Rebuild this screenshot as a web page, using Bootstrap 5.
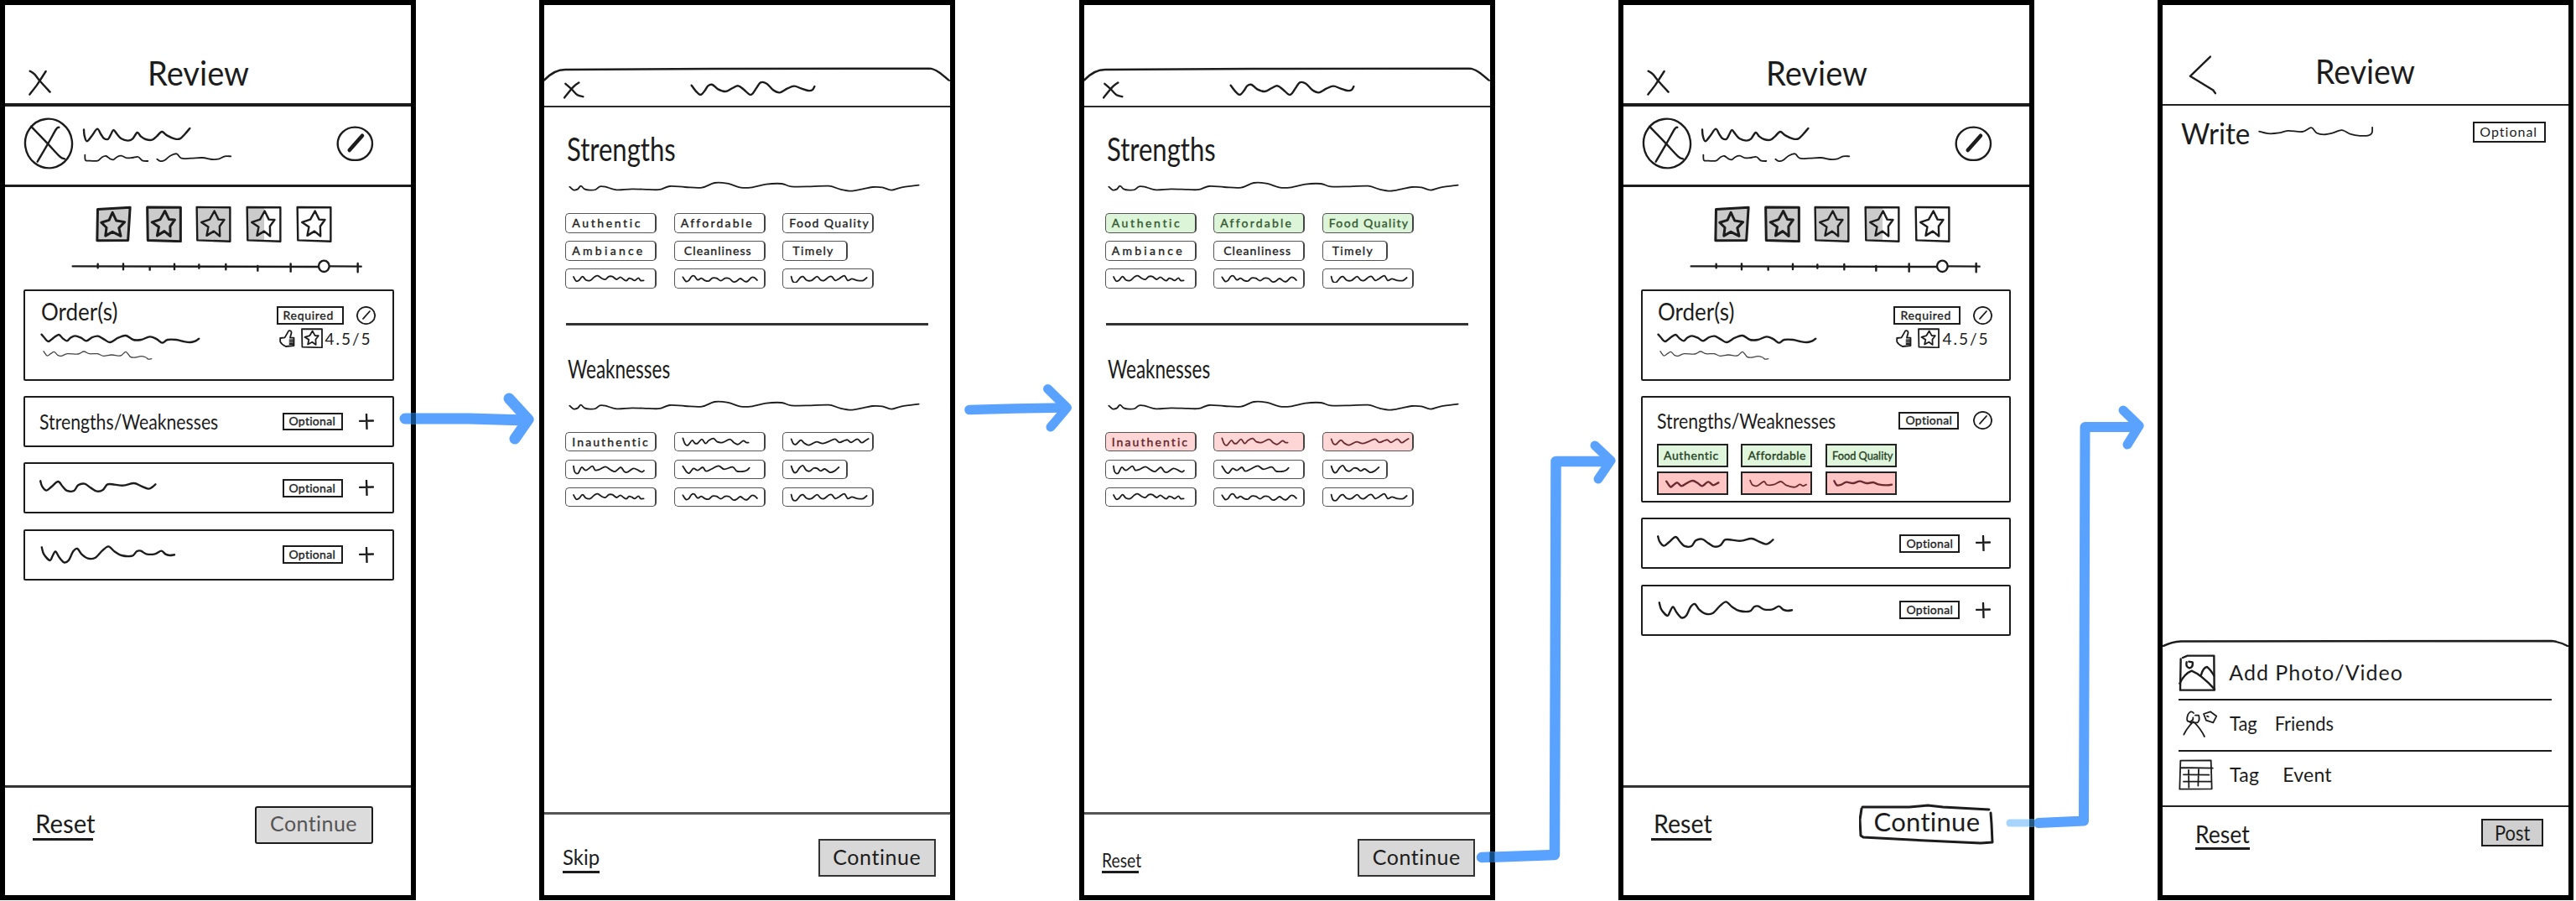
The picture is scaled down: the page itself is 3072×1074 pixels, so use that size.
<!DOCTYPE html>
<html lang="en">
<head>
<meta charset="utf-8">
<title>Review flow wireframes</title>
<link href="https://cdn.jsdelivr.net/npm/bootstrap@5.3.0/dist/css/bootstrap.min.css" rel="stylesheet">
<script src="https://cdn.jsdelivr.net/npm/bootstrap@5.3.0/dist/js/bootstrap.bundle.min.js"></script>
<style>
body{width:3072px;height:1074px;overflow:hidden;background:#fff;color:#1c1c1c;font-family:Lato,"Open Sans",sans-serif}
.board{gap:147.33px;height:1074px}
.phone{width:496px;height:1073px;border:6px solid #000;flex:none;background:#fff}
svg{display:block;flex:none;fill:none;stroke:#1c1c1c;stroke-width:2.4;stroke-linecap:round;stroke-linejoin:round}
symbol path,symbol ellipse{vector-effect:non-scaling-stroke}
.thin{stroke-width:1.8}.hair{stroke-width:1.3;stroke:#444}.bold{stroke-width:3}
.hand{display:block;line-height:1;white-space:nowrap;flex:none}
.hand>i{display:inline-block;font-style:normal;transform-origin:0 50%}
.f42{font-size:40px}.f38{font-size:38px}.f31{font-size:31px}.f28{font-size:28px}.f25{font-size:25px}.f23{font-size:23px}.f19{font-size:19px}.f14{font-size:14px;-webkit-text-stroke:.35px}
/* review screens */
.top-bar{height:121px;border-bottom:4px solid #1c1c1c;padding:0 0 7.5px 27px}
.top-bar .hand{margin:0 0 8.5px 113px}
.who{height:95.5px;border-bottom:3px solid #1c1c1c;padding:13px 44px 0 22.3px}
.who .lines{margin:10px 0 0 10px;gap:11.7px}
.who .edit{margin-top:9.5px}
.stars{padding:22px 0 0 108px;gap:16.7px}
.slide{margin:18px 0 18px 78px}
.stack{gap:18.4px;margin-left:22px;width:441.5px}
.shift .stack{margin-left:21px}
.box{border:2.5px solid #1c1c1c;border-radius:2px}
.box.order{height:109px;padding:10.5px 20px 0 18.5px}
.box.item{height:61px;padding:0 22px 0 17px}
.box.open{height:127px;padding:0 17px 0 17px}
.box.open .head{height:55px;padding-right:3px}
.tagbox{border:2.4px solid #1c1c1c;height:21.5px;width:72px;padding-left:6px}
.tagbox.req{width:80px}
.foot{height:131.5px;border-top:3px solid #333;padding:0 45.5px 0 33px}
.under{border-bottom:3px solid #1c1c1c}
.go{border:2.4px solid #1c1c1c;border-radius:3px;background:#dcdcdc;width:141px;height:45px;flex:none}
.mini{width:85px;height:28px;border:2.2px solid #222;padding-left:6px}
.minis{gap:5.5px 15.5px;width:287px}
.gr{background:#dff5dc;color:#24401f}.rd{background:#ffc4c4}
.rd svg{stroke:#6b2a30}
/* sheet screens */
.sheet-bar{height:31px;border-bottom:2.5px solid #2a2a2a;padding-left:22.4px}
.chips{display:grid;grid-template-columns:repeat(3,109px);gap:9.5px 20.5px;margin-left:25px}
.chip{height:23.5px;border:1.6px solid #555;border-right:2.6px solid #444;border-radius:5px;padding-left:7px}
.chip.short{width:78px}
.chip.gr{background:#dcf5d8;color:#33552f}.chip.rd{background:#ffd6d6;color:#5c2228}
.rule{height:2.2px;background:#333;margin-left:26px;width:432px}
.foot.low{height:99px;border-color:#555;padding:0 17.5px 0 21.7px}
.low .go{border-radius:0;width:140px;border-width:2px;border-color:#333;background:#d8d8d8}
/* write screen */
.opt{border-bottom:2.4px solid #1c1c1c}
</style>
</head>
<body>
<svg width="0" height="0" class="position-absolute">
<symbol id="x-a" viewBox="100 250 90 100" preserveAspectRatio="none"><path data-p="108 258 125 270 145 295 180 333"/><path data-p="165 259 135 305 107 342"/></symbol>
<symbol id="x-b" viewBox="95 108 75 70" preserveAspectRatio="none"><path data-p="102 120 125 142 145 163 165 169"/><path data-p="150 116 130 132 98 173"/></symbol>
<symbol id="w1" viewBox="295 450 395 60" preserveAspectRatio="none"><path data-p="301 463 303 485 312 505 330 485 349 461 362 480 373 495 388 497 398 480 407 465 420 480 435 496 458 503 475 497 492 474 505 488 522 498 545 500 562 487 580 471 598 484 625 496 645 496 662 480 680 459"/></symbol>
<symbol id="w2" viewBox="300 545 540 38" preserveAspectRatio="none"><path data-p="310 553 312 572 330 574 355 574 370 562 385 557 400 567 412 570 425 560 440 556 460 564 480 563 500 560 515 573 535 575"/><path data-p="568 568 580 575 595 572 615 556 638 549 655 565 690 565 730 563 765 569 790 567 810 558 832 558"/></symbol>
<symbol id="avatar" viewBox="85 420 180 185" preserveAspectRatio="none"><ellipse cx="175" cy="513" rx="84" ry="88" transform="rotate(-8 175 513)"/><path data-p="112 452 170 512 215 560 232 568"/><path data-p="212 455 202 462 172 515 135 578"/></symbol>
<symbol id="edit" viewBox="1205 450 134 128" preserveAspectRatio="none"><ellipse cx="1272" cy="514" rx="62" ry="59"/><path d="M1298 485L1252 537"/></symbol>
<symbol id="star-a" viewBox="340 731 139 139" preserveAspectRatio="none"><path d="M348 745L473 738 465 862 346 863Z"/><path d="M405 757L420 788 452 793 430 815 437 846 405 830 378 845 382 814 362 795 392 786Z"/></symbol>
<symbol id="star-b" viewBox="523 734 131 135" preserveAspectRatio="none"><path d="M528 740L649 741 649 865 530 861Z"/><path d="M592 754L607 785 628 786 611 810 612 846 590 828 564 844 570 812 545 795 575 785Z"/></symbol>
<symbol id="slider" viewBox="250 920 1050 60" preserveAspectRatio="none"><path d="M258 951L1135 953M1178 951L1290 952"/><path d="M348 943V957M439 942V963M534 953V964M622 943V962M710 945V958M806 944V963M920 950V967M1038 942V970M1278 941V972"/><ellipse cx="1157" cy="951" rx="19" ry="20"/></symbol>
<symbol id="w3" viewBox="112 195 460 45" preserveAspectRatio="none"><path data-p="118 203 125 213 137 228 152 215 167 204 178 217 190 226 200 215 213 208 230 215 245 226 262 213 278 209 295 220 312 231 335 215 357 207 378 222 400 222 425 211 445 220 460 233 475 222 500 222 520 228 540 231 555 226 564 218"/></symbol>
<symbol id="w4" viewBox="115 255 320 45" preserveAspectRatio="none"><path data-p="122 263 132 279 142 272 152 265 162 277 172 280 190 272 220 273 236 264 252 272 275 272 292 280 315 276 340 279 355 265 368 283 382 285 398 281 412 285 418 291 428 290"/></symbol>
<symbol id="w5" viewBox="105 720 345 55" preserveAspectRatio="none"><path data-p="115 730 120 750 132 764 147 750 165 732 178 750 190 765 210 765 222 745 240 740 258 755 275 767 292 762 305 742 325 743 350 746 380 738 400 748 420 758 432 752 441 742"/></symbol>
<symbol id="w6" viewBox="110 955 395 70" preserveAspectRatio="none"><path data-p="119 965 125 990 142 1012 150 995 158 980 168 1000 182 1019 195 1012 208 980 220 970 232 990 250 1005 270 1003 290 978 308 962 325 980 345 994 375 996 388 980 400 978 415 989 440 989 458 978 470 990 482 994 495 992"/></symbol>
<symbol id="thumb" viewBox="780 180 55 68" preserveAspectRatio="none"><path d="M790 213L803 211 814 187Q822 184 822 194L818 212H829V240L806 243Q794 236 790 226ZM817 220H829M817 227H829M817 234H829"/></symbol>
<symbol id="plus" viewBox="0 0 18 20" preserveAspectRatio="none"><path d="M1 9.3L17 9M9 1L9.5 19"/></symbol>
<symbol id="lip" viewBox="27 60 1453 50" preserveAspectRatio="none"><path d="M22 112C50 80 80 68 105 69L630 66 1405 65C1430 66 1450 85 1485 115"/></symbol>
<symbol id="w7" viewBox="548 108 450 56" preserveAspectRatio="none"><path data-p="553 125 568 145 585 159 600 145 612 127 628 123 648 139 675 147 700 135 720 127 740 140 765 159 785 135 800 115 822 119 845 142 868 151 895 137 920 128 945 136 970 144 985 142 993 129"/></symbol>
<symbol id="w8" viewBox="110 468 1262 40" preserveAspectRatio="none"><path data-p="117 488 130 499 145 497 157 485 170 496 190 500 210 498 225 487 245 488 285 499 340 496 400 498 440 498 475 486 530 489 590 491 635 474 680 476 730 491 770 490 820 479 875 477 910 487 980 487 1045 485 1085 497 1125 503 1165 496 1200 489 1235 490 1268 500 1305 490 1366 482"/></symbol>
<symbol id="c1" viewBox="130 798 265 32" preserveAspectRatio="none"><path data-p="136 807 145 822 155 820 168 806 180 818 195 820 210 808 222 803 238 813 250 816 262 806 275 806 290 816 303 808 315 816 325 821 335 812 345 815 355 820 368 811 376 820 387 820"/></symbol>
<symbol id="c2" viewBox="512 798 280 32" preserveAspectRatio="none"><path data-p="519 808 530 823 540 820 550 806 560 804 572 818 585 812 598 820 612 822 625 811 640 812 655 821 670 812 685 813 700 825 712 822 725 813 740 823 750 823 765 809 775 810 785 819"/></symbol>
<symbol id="c3" viewBox="905 800 285 32" preserveAspectRatio="none"><path data-p="913 808 918 825 930 829 945 812 955 808 968 821 985 822 1005 808 1018 820 1030 822 1048 809 1058 808 1070 822 1085 815 1103 805 1115 822 1130 816 1150 822 1170 822 1183 812"/></symbol>
<symbol id="c4" viewBox="515 515 250 38" preserveAspectRatio="none"><path data-p="522 522 530 543 540 547 555 530 565 540 575 540 590 526 603 541 615 530 632 523 645 535 665 537 690 526 705 538 720 544 738 531 748 537 757 538"/></symbol>
<symbol id="c5" viewBox="905 520 292 34" preserveAspectRatio="none"><path data-p="913 527 920 543 930 546 947 531 960 542 975 549 990 543 1005 537 1025 543 1045 537 1070 527 1085 539 1105 532 1115 530 1128 539 1150 527 1165 540 1180 532 1190 526"/></symbol>
<symbol id="c6" viewBox="130 610 265 38" preserveAspectRatio="none"><path data-p="136 618 140 638 152 644 165 622 180 633 203 618 213 632 228 630 250 620 270 632 285 637 305 622 318 638 330 639 350 626 368 633 380 639 388 634"/></symbol>
<symbol id="c7" viewBox="515 614 252 38" preserveAspectRatio="none"><path data-p="522 622 535 642 545 647 560 630 575 637 593 626 605 640 625 632 650 621 670 633 700 625 715 640 735 641 750 637 760 628"/></symbol>
<symbol id="c8" viewBox="902 612 185 38" preserveAspectRatio="none"><path data-p="910 620 918 640 928 642 940 625 952 618 962 633 975 638 990 627 1003 628 1015 637 1030 630 1048 642 1065 637 1080 624"/></symbol>
<symbol id="d1" viewBox="445 265 170 35" preserveAspectRatio="none"><path data-p="453 273 465 293 475 285 485 278 497 290 515 278 530 271 545 280 558 290 575 275 590 287 605 278"/></symbol>
<symbol id="d2" viewBox="690 272 185 35" preserveAspectRatio="none"><path data-p="698 277 705 293 720 296 740 281 750 293 770 292 792 281 810 295 835 301 850 291 860 297 870 292"/></symbol>
<symbol id="d3" viewBox="938 275 182 30" preserveAspectRatio="none"><path data-p="944 282 952 297 965 295 980 286 1000 290 1020 283 1040 290 1060 287 1075 294 1100 297 1115 295"/></symbol>
<symbol id="w9" viewBox="685 405 330 38" preserveAspectRatio="none"><path data-p="690 423 715 430 745 428 770 421 810 424 835 411 850 428 870 433 895 428 920 419 945 432 970 437 995 436 1004 428 1005 410"/></symbol>
<symbol id="back" viewBox="485 175 90 130" preserveAspectRatio="none"><path d="M550 182L494 245 558 290 564 300"/></symbol>
<symbol id="photo" viewBox="143 122 135 135" preserveAspectRatio="none"><path d="M158 134L175 127 270 127 271 250 149 250 151 138"/><path d="M147 226Q165 190 190 181Q225 195 272 247M224 195Q232 168 245 167Q256 175 270 198M172 150Q168 168 182 171Q196 168 193 150L180 148"/></symbol>
<symbol id="friend" viewBox="148 315 130 105" preserveAspectRatio="none"><path d="M190 330Q180 318 170 335Q160 360 176 361Q190 356 188 346M196 338L208 338Q214 355 204 364H178M188 361Q165 385 155 407M190 361Q215 385 229 414M226 333L250 325 272 341 260 364 235 356ZM238 341L243 343"/></symbol>
<symbol id="event" viewBox="145 488 125 115" preserveAspectRatio="none"><path d="M152 496L261 495 264 597 149 598ZM152 521L268 523M163 546L254 547M163 571L262 571M181 530L182 592M217 526L215 586"/></symbol>
</svg>

<div class="position-relative">
<main class="board d-flex">

<section class="phone d-flex flex-column">
  <header class="top-bar d-flex align-items-end"><svg width="30" height="33.3"><use href="#x-a"/></svg><span class="hand f42" data-w="121"><i>Review</i></span></header>
  <div class="who d-flex align-items-start"><svg width="60" height="61.7"><use href="#avatar"/></svg><div class="lines d-flex flex-column"><svg width="131.7" height="20"><use href="#w1"/></svg><svg width="180" height="12.7" class="thin"><use href="#w2"/></svg></div><svg width="44.7" height="42.7" class="edit ms-auto"><use href="#edit"/><path d="M31 11.7L15.7 29" stroke-width="4.5"/></svg></div>
  <div class="stars d-flex"><svg width="43" height="44" class="bold"><path d="M3 4L41 2 39 42 2 42Z" fill="#cbcbcb" stroke="none"/><use href="#star-a"/></svg><svg width="43" height="44" class="bold"><path d="M2 2H41V42H2Z" fill="#cbcbcb" stroke="none"/><use href="#star-b"/></svg><svg width="43" height="44"><path d="M2 2H41V42H2Z" fill="#cbcbcb" stroke="none"/><use href="#star-b"/></svg><svg width="43" height="44"><path d="M2 2H22V42H2Z" fill="#cbcbcb" stroke="none"/><use href="#star-b"/></svg><svg width="43" height="44"><use href="#star-b"/></svg></div>
  <svg width="350" height="20" class="slide"><use href="#slider"/></svg>
  <div class="stack d-flex flex-column">
    <div class="box order d-flex justify-content-between">
      <div><span class="hand f28" data-w="91"><i>Order(s)</i></span><svg width="193.6" height="15" style="margin:10.8px 0 5px -2px"><use href="#w3"/></svg><svg width="134.7" height="15" class="hair"><use href="#w4"/></svg></div>
      <div class="pt-2"><div class="d-flex align-items-center justify-content-between" style="width:118px"><div class="tagbox req d-flex align-items-center"><span class="hand f14" data-w="60"><i>Required</i></span></div><svg width="23" height="22" class="thin"><use href="#edit"/></svg></div>
      <div class="d-flex align-items-center mt-1"><svg width="23" height="22.7" class="thin"><use href="#thumb"/></svg><svg width="26" height="24" style="margin:0 3px 0 6px" class="thin"><use href="#star-b"/></svg><span class="hand f19" data-w="54"><i>4.5/5</i></span></div></div>
    </div>
    <div class="box item d-flex align-items-center"><span class="hand f25" data-w="213"><i>Strengths/Weaknesses</i></span><div class="tagbox d-flex align-items-center ms-auto"><span class="hand f14" data-w="55"><i>Optional</i></span></div><svg width="18" height="19" style="margin-left:19px"><use href="#plus"/></svg></div>
    <div class="box item d-flex align-items-center"><svg width="145.2" height="18.3" style="margin:0 0 5px -3px"><use href="#w5"/></svg><div class="tagbox d-flex align-items-center ms-auto"><span class="hand f14" data-w="55"><i>Optional</i></span></div><svg width="18" height="19" style="margin-left:19px"><use href="#plus"/></svg></div>
    <div class="box item d-flex align-items-center"><svg width="166.2" height="23.3" style="margin:0 0 2px -1px"><use href="#w6"/></svg><div class="tagbox d-flex align-items-center ms-auto"><span class="hand f14" data-w="55"><i>Optional</i></span></div><svg width="18" height="19" style="margin-left:19px"><use href="#plus"/></svg></div>
  </div>
  <footer class="foot d-flex justify-content-between align-items-start mt-auto"><div class="under" style="margin-top:27px;height:36px;padding-left:3px;width:72px"><span class="hand f31" data-w="72"><i>Reset</i></span></div><div class="go d-flex align-items-center justify-content-center" style="margin-top:22px;color:#555;padding-bottom:4px"><span class="hand f25" data-w="104"><i>Continue</i></span></div></footer>
</section>

<section class="phone d-flex flex-column">
  <svg width="484" height="16.7" style="margin-top:74px"><use href="#lip"/></svg>
  <header class="sheet-bar d-flex"><svg width="25" height="22" style="margin-top:-1px"><use href="#x-b"/></svg><svg width="150" height="18.7" style="margin:-1px 0 0 126px"><use href="#w7"/></svg></header>
  <span class="hand f38" data-w="130" style="margin:30px 0 20.7px 27px"><i>Strengths</i></span>
  <svg width="420.7" height="13.3" class="thin" style="margin:0 0 24.7px 27.4px"><use href="#w8"/></svg>
  <div class="chips">
    <div class="chip d-flex align-items-center"><span class="hand f14" data-w="81"><i>Authentic</i></span></div><div class="chip d-flex align-items-center"><span class="hand f14" data-w="84"><i>Affordable</i></span></div><div class="chip d-flex align-items-center"><span class="hand f14" data-w="94"><i>Food Quality</i></span></div>
    <div class="chip d-flex align-items-center"><span class="hand f14" data-w="84"><i>Ambiance</i></span></div><div class="chip d-flex align-items-center"><span class="hand f14 ms-1" data-w="80"><i>Cleanliness</i></span></div><div class="chip short d-flex align-items-center"><span class="hand f14 ms-1" data-w="48"><i>Timely</i></span></div>
    <div class="chip d-flex align-items-center"><svg width="88.3" height="10.7" class="thin"><use href="#c1"/></svg></div><div class="chip d-flex align-items-center"><svg width="93.3" height="10.7" class="thin"><use href="#c2"/></svg></div><div class="chip d-flex align-items-center"><svg width="95" height="10.7" class="thin"><use href="#c3"/></svg></div>
  </div>
  <div class="rule" style="margin-top:41.5px"></div>
  <span class="hand f31" data-w="122" style="margin:36px 0 22px 28px"><i>Weaknesses</i></span>
  <svg width="420.7" height="13.3" class="thin" style="margin:0 0 25px 27.4px"><use href="#w8"/></svg>
  <div class="chips">
    <div class="chip d-flex align-items-center"><span class="hand f14" data-w="91"><i>Inauthentic</i></span></div><div class="chip d-flex align-items-center"><svg width="83.3" height="12.7" class="thin"><use href="#c4"/></svg></div><div class="chip d-flex align-items-center"><svg width="97" height="11.3" class="thin"><use href="#c5"/></svg></div>
    <div class="chip d-flex align-items-center"><svg width="88.3" height="12.7" class="thin"><use href="#c6"/></svg></div><div class="chip d-flex align-items-center"><svg width="84" height="12.7" class="thin"><use href="#c7"/></svg></div><div class="chip short d-flex align-items-center"><svg width="61.7" height="12.7" class="thin"><use href="#c8"/></svg></div>
    <div class="chip d-flex align-items-center"><svg width="88.3" height="10.7" class="thin"><use href="#c1"/></svg></div><div class="chip d-flex align-items-center"><svg width="93.3" height="10.7" class="thin"><use href="#c2"/></svg></div><div class="chip d-flex align-items-center"><svg width="95" height="10.7" class="thin"><use href="#c3"/></svg></div>
  </div>
  <footer class="foot low d-flex justify-content-between align-items-start mt-auto"><div class="under" style="margin-top:38px;height:32px;width:44px"><span class="hand f25" data-w="44"><i>Skip</i></span></div><div class="go d-flex align-items-center justify-content-center" style="margin-top:29px;padding-bottom:3px"><span class="hand f25" data-w="105"><i>Continue</i></span></div></footer>
</section>

<section class="phone d-flex flex-column">
  <svg width="484" height="16.7" style="margin-top:74px"><use href="#lip"/></svg>
  <header class="sheet-bar d-flex"><svg width="25" height="22" style="margin-top:-1px"><use href="#x-b"/></svg><svg width="150" height="18.7" style="margin:-1px 0 0 126px"><use href="#w7"/></svg></header>
  <span class="hand f38" data-w="130" style="margin:30px 0 20.7px 27px"><i>Strengths</i></span>
  <svg width="420.7" height="13.3" class="thin" style="margin:0 0 24.7px 27.4px"><use href="#w8"/></svg>
  <div class="chips">
    <div class="chip gr d-flex align-items-center"><span class="hand f14" data-w="81"><i>Authentic</i></span></div><div class="chip gr d-flex align-items-center"><span class="hand f14" data-w="84"><i>Affordable</i></span></div><div class="chip gr d-flex align-items-center"><span class="hand f14" data-w="94"><i>Food Quality</i></span></div>
    <div class="chip d-flex align-items-center"><span class="hand f14" data-w="84"><i>Ambiance</i></span></div><div class="chip d-flex align-items-center"><span class="hand f14 ms-1" data-w="80"><i>Cleanliness</i></span></div><div class="chip short d-flex align-items-center"><span class="hand f14 ms-1" data-w="48"><i>Timely</i></span></div>
    <div class="chip d-flex align-items-center"><svg width="88.3" height="10.7" class="thin"><use href="#c1"/></svg></div><div class="chip d-flex align-items-center"><svg width="93.3" height="10.7" class="thin"><use href="#c2"/></svg></div><div class="chip d-flex align-items-center"><svg width="95" height="10.7" class="thin"><use href="#c3"/></svg></div>
  </div>
  <div class="rule" style="margin-top:41.5px"></div>
  <span class="hand f31" data-w="122" style="margin:36px 0 22px 28px"><i>Weaknesses</i></span>
  <svg width="420.7" height="13.3" class="thin" style="margin:0 0 25px 27.4px"><use href="#w8"/></svg>
  <div class="chips">
    <div class="chip rd d-flex align-items-center"><span class="hand f14" data-w="91"><i>Inauthentic</i></span></div><div class="chip rd d-flex align-items-center"><svg width="83.3" height="12.7" class="thin"><use href="#c4"/></svg></div><div class="chip rd d-flex align-items-center"><svg width="97" height="11.3" class="thin"><use href="#c5"/></svg></div>
    <div class="chip d-flex align-items-center"><svg width="88.3" height="12.7" class="thin"><use href="#c6"/></svg></div><div class="chip d-flex align-items-center"><svg width="84" height="12.7" class="thin"><use href="#c7"/></svg></div><div class="chip short d-flex align-items-center"><svg width="61.7" height="12.7" class="thin"><use href="#c8"/></svg></div>
    <div class="chip d-flex align-items-center"><svg width="88.3" height="10.7" class="thin"><use href="#c1"/></svg></div><div class="chip d-flex align-items-center"><svg width="93.3" height="10.7" class="thin"><use href="#c2"/></svg></div><div class="chip d-flex align-items-center"><svg width="95" height="10.7" class="thin"><use href="#c3"/></svg></div>
  </div>
  <footer class="foot low d-flex justify-content-between align-items-start mt-auto"><div class="under" style="margin-top:43px;height:27px;width:44px"><span class="hand f23" data-w="47"><i>Reset</i></span></div><div class="go d-flex align-items-center justify-content-center" style="margin-top:29px;padding-bottom:3px"><span class="hand f25" data-w="105"><i>Continue</i></span></div></footer>
</section>

<section class="phone shift d-flex flex-column">
  <header class="top-bar d-flex align-items-end"><svg width="30" height="33.3"><use href="#x-a"/></svg><span class="hand f42" data-w="121"><i>Review</i></span></header>
  <div class="who d-flex align-items-start"><svg width="60" height="61.7"><use href="#avatar"/></svg><div class="lines d-flex flex-column"><svg width="131.7" height="20"><use href="#w1"/></svg><svg width="180" height="12.7" class="thin"><use href="#w2"/></svg></div><svg width="44.7" height="42.7" class="edit ms-auto"><use href="#edit"/><path d="M31 11.7L15.7 29" stroke-width="4.5"/></svg></div>
  <div class="stars d-flex"><svg width="43" height="44" class="bold"><path d="M3 4L41 2 39 42 2 42Z" fill="#cbcbcb" stroke="none"/><use href="#star-a"/></svg><svg width="43" height="44" class="bold"><path d="M2 2H41V42H2Z" fill="#cbcbcb" stroke="none"/><use href="#star-b"/></svg><svg width="43" height="44"><path d="M2 2H41V42H2Z" fill="#cbcbcb" stroke="none"/><use href="#star-b"/></svg><svg width="43" height="44"><path d="M2 2H22V42H2Z" fill="#cbcbcb" stroke="none"/><use href="#star-b"/></svg><svg width="43" height="44"><use href="#star-b"/></svg></div>
  <svg width="350" height="20" class="slide"><use href="#slider"/></svg>
  <div class="stack d-flex flex-column">
    <div class="box order d-flex justify-content-between">
      <div><span class="hand f28" data-w="91"><i>Order(s)</i></span><svg width="193.6" height="15" style="margin:10.8px 0 5px -2px"><use href="#w3"/></svg><svg width="134.7" height="15" class="hair"><use href="#w4"/></svg></div>
      <div class="pt-2"><div class="d-flex align-items-center justify-content-between" style="width:118px"><div class="tagbox req d-flex align-items-center"><span class="hand f14" data-w="60"><i>Required</i></span></div><svg width="23" height="22" class="thin"><use href="#edit"/></svg></div>
      <div class="d-flex align-items-center mt-1"><svg width="23" height="22.7" class="thin"><use href="#thumb"/></svg><svg width="26" height="24" style="margin:0 3px 0 6px" class="thin"><use href="#star-b"/></svg><span class="hand f19" data-w="54"><i>4.5/5</i></span></div></div>
    </div>
    <div class="box open">
      <div class="head d-flex align-items-center"><span class="hand f25" data-w="213"><i>Strengths/Weaknesses</i></span><div class="tagbox d-flex align-items-center ms-auto"><span class="hand f14" data-w="55"><i>Optional</i></span></div><svg width="23" height="22" class="thin" style="margin-left:17px"><use href="#edit"/></svg></div>
      <div class="minis d-flex flex-wrap">
        <div class="mini gr d-flex align-items-center"><span class="hand f14" data-w="65"><i>Authentic</i></span></div><div class="mini gr d-flex align-items-center"><span class="hand f14" data-w="68"><i>Affordable</i></span></div><div class="mini gr d-flex align-items-center"><span class="hand f14" data-w="72"><i>Food Quality</i></span></div>
        <div class="mini rd d-flex align-items-center"><svg width="69.4" height="11.7"><use href="#d1"/></svg></div><div class="mini rd d-flex align-items-center"><svg width="72" height="11.7" class="thin"><use href="#d2"/></svg></div><div class="mini rd d-flex align-items-center"><svg width="73" height="10"><use href="#d3"/></svg></div>
      </div>
    </div>
    <div class="box item d-flex align-items-center"><svg width="145.2" height="18.3" style="margin:0 0 5px -3px"><use href="#w5"/></svg><div class="tagbox d-flex align-items-center ms-auto"><span class="hand f14" data-w="55"><i>Optional</i></span></div><svg width="18" height="19" style="margin-left:19px"><use href="#plus"/></svg></div>
    <div class="box item d-flex align-items-center"><svg width="166.2" height="23.3" style="margin:0 0 2px -1px"><use href="#w6"/></svg><div class="tagbox d-flex align-items-center ms-auto"><span class="hand f14" data-w="55"><i>Optional</i></span></div><svg width="18" height="19" style="margin-left:19px"><use href="#plus"/></svg></div>
  </div>
  <footer class="foot d-flex justify-content-between align-items-start mt-auto"><div class="under" style="margin-top:27px;height:36px;padding-left:3px;width:72px"><span class="hand f31" data-w="70"><i>Reset</i></span></div><div class="d-flex align-items-center justify-content-center position-relative" style="margin:18px -4px 0 0;width:161px;height:51px;padding-bottom:5px"><svg width="161" height="51" class="bold position-absolute top-0 start-0"><path d="M4 5L60 5 82 3 100 5 155 8M157 12L158 25 159 47 145 48 80 45 5 41M3 7L1 20 2 39 5 41"/></svg><span class="hand f31" data-w="127"><i>Continue</i></span></div></footer>
</section>

<section class="phone d-flex flex-column">
  <header class="d-flex align-items-start" style="height:119.5px;border-bottom:2.6px solid #222;padding:59px 0 0 29px"><svg width="38.6" height="48"><use href="#back"/></svg><span class="hand f42" data-w="119" style="margin:0 0 0 114px"><i>Review</i></span></header>
  <div class="d-flex align-items-start" style="height:634px;padding:19px 27px 0 22px"><span class="hand" data-w="82" style="font-size:34px;margin-top:-3px"><i>Write</i></span><svg width="141.4" height="14" class="thin" style="margin:5.5px 0 0 9px"><use href="#w9"/></svg><div class="tagbox d-flex align-items-center ms-auto" style="width:87px;height:25px"><span class="hand" data-w="68" style="font-size:16px"><i>Optional</i></span></div></div>
  <svg width="484" height="11"><path d="M-1 11Q10 5 22 4.500L464 4Q478 6 486 12"/></svg>
  <div style="padding:4px 20px 0 19px">
    <div class="opt d-flex align-items-center" style="height:60px;padding-bottom:4px"><svg width="45" height="45" style="margin-top:2px"><use href="#photo"/></svg><span class="hand f25" data-w="207" style="margin-left:15px"><i>Add Photo/Video</i></span></div>
    <div class="opt d-flex align-items-center" style="height:61px;padding-bottom:4px"><svg width="43.3" height="35" class="ms-1 thin" style="margin-right:-3px"><use href="#friend"/></svg><span class="hand f23" data-w="124" style="margin-left:16px;word-spacing:16px"><i>Tag Friends</i></span></div>
    <div class="d-flex align-items-center" style="height:55px"><svg width="41.7" height="38.3" class="thin"><use href="#event"/></svg><span class="hand f23" data-w="122" style="margin-left:19px;word-spacing:22px"><i>Tag Event</i></span></div>
  </div>
  <footer class="d-flex justify-content-between align-items-start mt-auto" style="height:107.5px;border-top:2.6px solid #222;padding:0 30.5px 0 38.5px"><div class="under" style="margin-top:17px;height:34px;width:65px"><span class="hand" data-w="65" style="font-size:29px"><i>Reset</i></span></div><div class="go d-flex align-items-center justify-content-center" style="margin-top:14px;width:74px;height:33px;border-radius:0;background:#cfcfcf"><span class="hand f25" data-w="42"><i>Post</i></span></div></footer>
</section>
</main>

<!-- flow arrows over the screens -->
<svg width="3072" height="1074" class="position-absolute top-0 start-0" style="stroke:#5aa2ff;stroke-width:13">
  <path d="M483 499L560 499 627 501"/><path d="M607 475L630 500 614 523"/>
  <path d="M1156 488.500L1210 487 1268 486" stroke-width="11.500"/><path d="M1249.500 463.500L1272.500 486 1253 509" stroke-width="11"/>
  <path d="M1767 1022L1800 1021 1854 1019 1855.500 550H1918" stroke-width="12.500"/><path d="M1902 531L1921 549 1906 571" stroke-width="11"/>
  <path d="M2397 981H2424" stroke="#a6d4fd" stroke-width="9"/><path d="M2431 981L2485 978.500 2486.500 509H2548" stroke-width="12"/><path d="M2532 489L2551 507.500 2537 530" stroke-width="11"/>
  <path d="M493 492.500V505.500M1779.500 1015.500V1028" stroke="#124c86" stroke-width="6" stroke-linecap="butt"/>
  <path d="M2423 976.500V985.500" stroke="#245a86" stroke-width="6" stroke-linecap="butt"/>
</svg>
</div>

<script>
// Turn point lists into smooth pen strokes (Catmull-Rom to Bezier)
document.querySelectorAll('path[data-p]').forEach(function (el) {
  var n = el.dataset.p.split(' ').map(Number), p = [];
  for (var i = 0; i < n.length; i += 2) p.push([n[i], n[i + 1]]);
  var d = 'M' + p[0];
  for (i = 0; i < p.length - 1; i++) {
    var a = p[i - 1] || p[i], b = p[i], c = p[i + 1], e = p[i + 2] || c;
    d += 'C' + [b[0] + (c[0] - a[0]) / 6, b[1] + (c[1] - a[1]) / 6, c[0] - (e[0] - b[0]) / 6, c[1] - (e[1] - b[1]) / 6, c[0], c[1]];
  }
  el.setAttribute('d', d);
});
// Fit each label to its drawn width
document.querySelectorAll('.hand[data-w]').forEach(function (el) {
  var t = el.firstElementChild, w = +el.dataset.w, nat = t.offsetWidth;
  if (nat < w) t.style.letterSpacing = (w - nat) / (t.textContent.length - 1) + 'px';
  else t.style.transform = 'scaleX(' + w / nat + ')';
  el.style.width = w + 'px';
});
</script>
</body>
</html>
